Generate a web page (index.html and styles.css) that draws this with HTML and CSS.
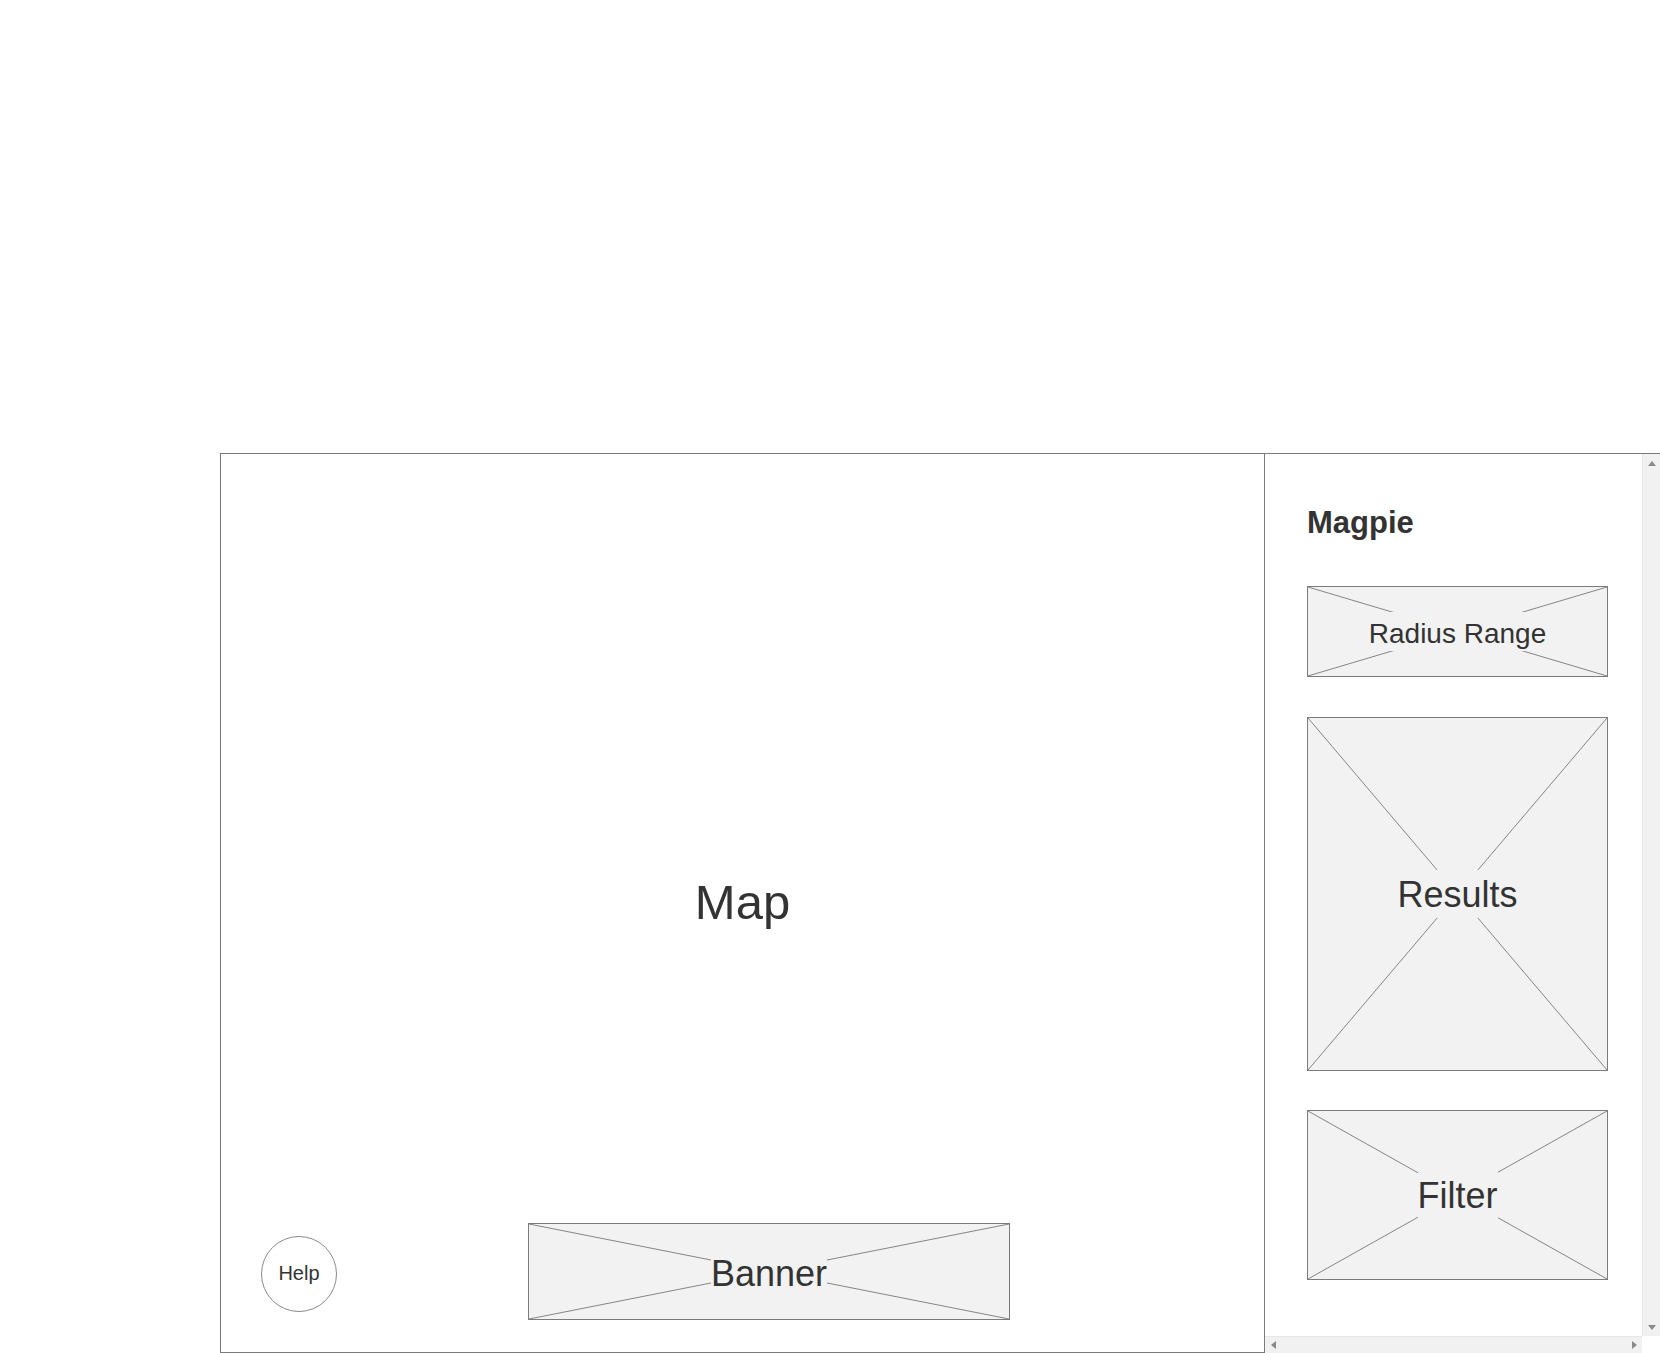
FILE: index.html
```html
<!DOCTYPE html>
<html lang="en">
<head>
<meta charset="utf-8">
<title>Magpie</title>
<link rel="stylesheet" href="styles.css">
</head>
<body>
<div class="page">
  <div class="frame">
    <div class="map">
      <div class="map-label">Map</div>
      <button class="help">Help</button>
      <div class="ph banner">
        <svg class="x" viewBox="0 0 100 100" preserveAspectRatio="none"><line x1="0" y1="0" x2="100" y2="100"/><line x1="100" y1="0" x2="0" y2="100"/></svg>
        <span class="ph-label banner-label">Banner</span>
      </div>
    </div>
    <div class="sidebar">
      <div class="side-inner">
        <h1 class="title">Magpie</h1>
        <div class="ph radius">
          <svg class="x" viewBox="0 0 100 100" preserveAspectRatio="none"><line x1="0" y1="0" x2="100" y2="100"/><line x1="100" y1="0" x2="0" y2="100"/></svg>
          <span class="ph-label radius-label">Radius Range</span>
        </div>
        <div class="ph results">
          <svg class="x" viewBox="0 0 100 100" preserveAspectRatio="none"><line x1="0" y1="0" x2="100" y2="100"/><line x1="100" y1="0" x2="0" y2="100"/></svg>
          <span class="ph-label big-label">Results</span>
        </div>
        <div class="ph filter">
          <svg class="x" viewBox="0 0 100 100" preserveAspectRatio="none"><line x1="0" y1="0" x2="100" y2="100"/><line x1="100" y1="0" x2="0" y2="100"/></svg>
          <span class="ph-label big-label">Filter</span>
        </div>
      </div>
      <div class="vbar">
        <span class="arrow up"></span>
        <span class="arrow down"></span>
      </div>
      <div class="hbar">
        <span class="arrow left"></span>
        <span class="arrow right"></span>
      </div>
      <div class="corner"></div>
    </div>
  </div>
</div>
</body>
</html>
```
FILE: styles.css
```css
html, body {
  margin: 0;
  padding: 0;
  background: #ffffff;
  overflow: hidden;
}
body {
  font-family: "Liberation Sans", Arial, sans-serif;
  color: #333333;
}
.page {
  padding: 453px 0 0 220px;
}
.frame {
  display: flex;
  width: 1440px;
  height: 900px;
}
.map {
  position: relative;
  width: 1045px;
  height: 900px;
  box-sizing: border-box;
  border: 1px solid #7b7b7b;
  display: flex;
  align-items: center;
  justify-content: center;
  flex: none;
}
.map-label {
  font-size: 49px;
  line-height: 1;
  padding-bottom: 2px;
}
.help {
  position: absolute;
  left: 40px;
  bottom: 40px;
  width: 76px;
  height: 76px;
  border-radius: 50%;
  border: 1px solid #8a8a8a;
  background: #ffffff;
  font-family: "Liberation Sans", Arial, sans-serif;
  font-size: 20px;
  color: #333333;
  padding: 0 0 2px 0;
}
.ph {
  position: relative;
  box-sizing: border-box;
  border: 1px solid #7b7b7b;
  background: #f2f2f2;
  display: flex;
  align-items: center;
  justify-content: center;
}
.ph .x {
  position: absolute;
  left: 0;
  top: 0;
  width: 100%;
  height: 100%;
}
.ph .x line {
  stroke: #858585;
  stroke-width: 1;
  vector-effect: non-scaling-stroke;
}
.ph-label {
  position: relative;
  background: #f2f2f2;
  padding: 4px 0 2px 0;
  line-height: 1.15;
  white-space: nowrap;
}
.banner {
  position: absolute;
  left: 307px;
  bottom: 32px;
  width: 482px;
  height: 97px;
}
.banner-label {
  font-size: 36px;
  padding: 4px 0 0 0;
}
.sidebar {
  flex: 1;
  height: 900px;
  box-sizing: border-box;
  border-top: 1px solid #7b7b7b;
  display: grid;
  grid-template-columns: 1fr 18px;
  grid-template-rows: 1fr 17px;
  overflow: hidden;
}
.side-inner {
  display: flex;
  flex-direction: column;
  gap: 40px;
  padding: 52px 0 0 42px;
  overflow: hidden;
}
.title {
  margin: 0 0 6px 0;
  font-size: 31px;
  line-height: 34px;
  font-weight: bold;
  color: #333333;
}
.radius, .results, .filter {
  width: 301px;
  flex: none;
}
.radius { height: 91px; }
.results { height: 354px; }
.filter { height: 170px; margin-top: -1px; }
.radius-label {
  font-size: 28px;
  padding: 6px 0 1px 0;
}
.big-label {
  font-size: 36px;
}
.vbar {
  background: #f1f1f1;
  border-left: 1px solid #e6e6e6;
  box-sizing: border-box;
  display: flex;
  flex-direction: column;
  justify-content: space-between;
  align-items: center;
  padding: 7px 0 6px 0;
}
.hbar {
  background: #f1f1f1;
  border-top: 1px solid #e6e6e6;
  box-sizing: border-box;
  display: flex;
  justify-content: space-between;
  align-items: center;
  padding: 0 5px 0 6px;
}
.corner {
  background: #ffffff;
}
.arrow {
  width: 0;
  height: 0;
  display: block;
}
.arrow.up {
  border-left: 4.5px solid transparent;
  border-right: 4.5px solid transparent;
  border-bottom: 5px solid #8a8a8a;
}
.arrow.down {
  border-left: 4.5px solid transparent;
  border-right: 4.5px solid transparent;
  border-top: 5px solid #8a8a8a;
}
.arrow.left {
  border-top: 4.5px solid transparent;
  border-bottom: 4.5px solid transparent;
  border-right: 5px solid #8a8a8a;
}
.arrow.right {
  border-top: 4.5px solid transparent;
  border-bottom: 4.5px solid transparent;
  border-left: 5px solid #8a8a8a;
}
```
